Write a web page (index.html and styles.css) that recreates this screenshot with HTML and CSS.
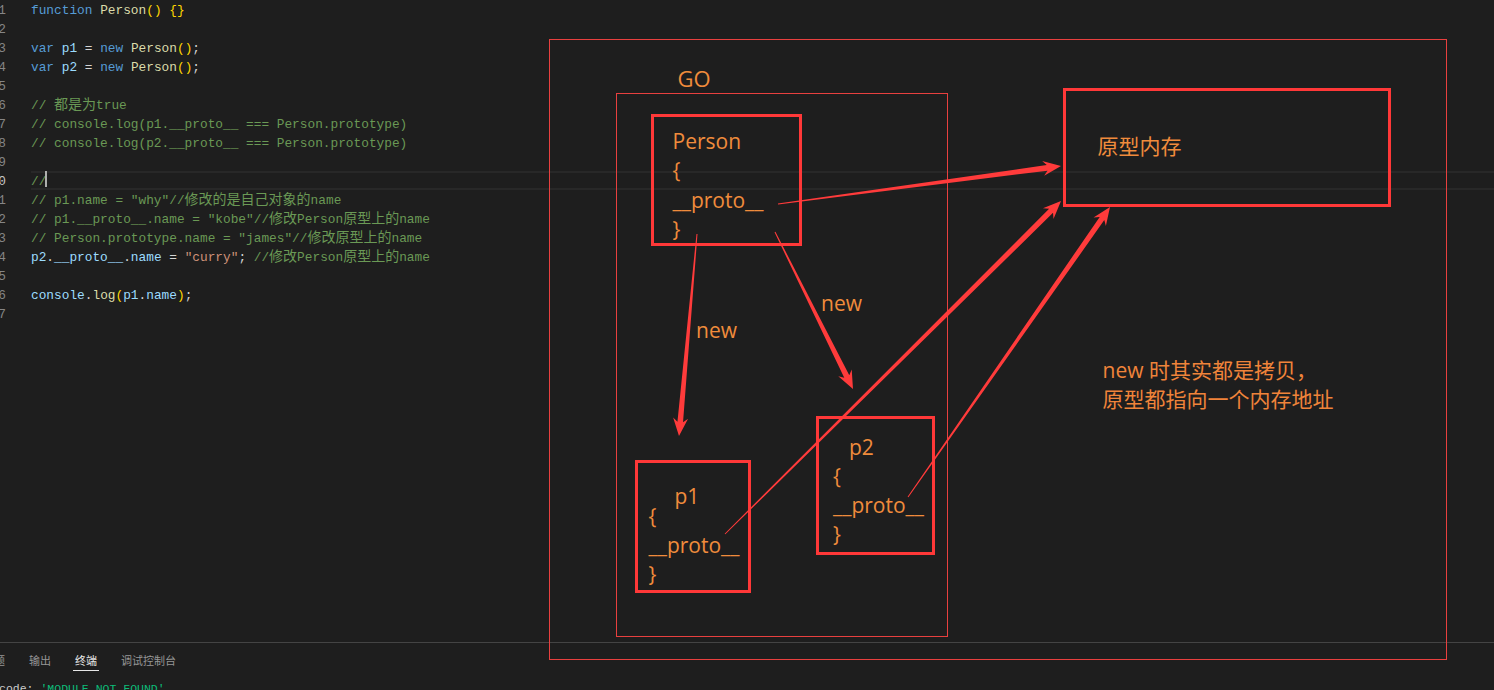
FILE: index.html
```html
<!DOCTYPE html>
<html lang="zh-CN">
<head>
<meta charset="utf-8">
<title>prototype</title>
<link rel="stylesheet" href="styles.css">
</head>
<body>
<div class="editor">
  <div class="gutter">
    <div class="ln">1</div><div class="ln">2</div><div class="ln">3</div><div class="ln">4</div>
    <div class="ln">5</div><div class="ln">6</div><div class="ln">7</div><div class="ln">8</div>
    <div class="ln">9</div><div class="ln cur">10</div><div class="ln">11</div><div class="ln">12</div>
    <div class="ln">13</div><div class="ln">14</div><div class="ln">15</div><div class="ln">16</div>
    <div class="ln">17</div>
  </div>
  <div class="code">
    <div class="line"><span class="k">function</span> <span class="f">Person</span><span class="b">()</span> <span class="b">{}</span></div>
    <div class="line"></div>
    <div class="line"><span class="k">var</span> <span class="v">p1</span> = <span class="k">new</span> <span class="f">Person</span><span class="b">()</span>;</div>
    <div class="line"><span class="k">var</span> <span class="v">p2</span> = <span class="k">new</span> <span class="f">Person</span><span class="b">()</span>;</div>
    <div class="line"></div>
    <div class="line"><span class="c">// <span class="z">都是为</span>true</span></div>
    <div class="line"><span class="c">// console.log(p1.__proto__ === Person.prototype)</span></div>
    <div class="line"><span class="c">// console.log(p2.__proto__ === Person.prototype)</span></div>
    <div class="line"></div>
    <div class="line current"><span class="c">//</span><span class="caret"></span></div>
    <div class="line"><span class="c">// p1.name = "why"//<span class="z">修改的是自己对象的</span>name</span></div>
    <div class="line"><span class="c">// p1.__proto__.name = "kobe"//<span class="z">修改</span>Person<span class="z">原型上的</span>name</span></div>
    <div class="line"><span class="c">// Person.prototype.name = "james"//<span class="z">修改原型上的</span>name</span></div>
    <div class="line"><span class="v">p2</span>.<span class="v">__proto__</span>.<span class="v">name</span> = <span class="s">"curry"</span>; <span class="c">//<span class="z">修改</span>Person<span class="z">原型上的</span>name</span></div>
    <div class="line"></div>
    <div class="line"><span class="v">console</span>.<span class="f">log</span><span class="b">(</span><span class="v">p1</span>.<span class="v">name</span><span class="b">)</span>;</div>
    <div class="line"></div>
  </div>
</div>

<div class="panel">
  <div class="tabs">
    <div class="tab">问题</div>
    <div class="tab">输出</div>
    <div class="tab active">终端</div>
    <div class="tab">调试控制台</div>
  </div>
  <div class="term"><span class="t-key">code: </span><span class="t-str">'MODULE_NOT_FOUND'</span></div>
</div>

<div class="diagram">
  <div class="frame outer"></div>
  <div class="frame go"></div>
  <div class="label go-label">GO</div>
  <div class="label new1">new</div>
  <div class="label new2">new</div>
  <div class="label note">
    <div>new 时其实都是拷贝，</div>
    <div>原型都指向一个内存地址</div>
  </div>

  <div class="box person">
    <div class="title">Person</div>
    <div>{</div>
    <div>__proto__</div>
    <div>}</div>
  </div>

  <div class="box memory">
    <div>原型内存</div>
  </div>

  <div class="box p1">
    <div class="title">p1</div>
    <div>{</div>
    <div>__proto__</div>
    <div>}</div>
  </div>

  <div class="box p2">
    <div class="title">p2</div>
    <div>{</div>
    <div>__proto__</div>
    <div>}</div>
  </div>

  <svg class="arrows" viewBox="0 0 1494 690" width="1494" height="690">
    <polygon points="778.07,204.50 1047.50,170.64 1044.16,175.83 1061,166 1042.16,160.97 1046.76,165.09 777.93,203.50"/>
    <polygon points="696.50,233.96 677.45,421.81 673.13,417.40 679,436 688.07,418.74 683.03,422.31 697.50,234.04"/>
    <polygon points="774.55,232.22 844.26,377.71 838.27,376.22 853,389 851.71,369.54 849.28,375.21 775.45,231.78"/>
    <polygon points="725.35,534.36 1053.03,212.85 1053.50,219.00 1061,201 1042.94,208.34 1049.09,208.87 724.65,533.64"/>
    <polygon points="908.41,497.29 1104.30,220.09 1105.86,226.06 1110,207 1093.56,217.48 1099.70,216.89 907.59,496.71"/>
  </svg>
</div>
</body>
</html>
```

FILE: styles.css
```css
html, body {
  margin: 0;
  padding: 0;
}

body {
  width: 1494px;
  height: 690px;
  overflow: hidden;
  background: #1e1e1e;
  position: relative;
  display: flex;
  flex-direction: column;
}

/* ---------- editor ---------- */
.editor {
  height: 642px;
  display: flex;
  flex-shrink: 0;
  font-family: "Liberation Mono", "DejaVu Sans Mono", monospace;
  font-size: 12.8px;
}

.gutter {
  width: 31px;
  flex-shrink: 0;
  box-sizing: border-box;
  padding-right: 25px;
  color: #858585;
}

.ln {
  margin-left: -24px;
  height: 19px;
  line-height: 21px;
  text-align: right;
  white-space: pre;
}

.ln.cur {
  color: #c6c6c6;
}

.code {
  flex: 1;
  color: #d4d4d4;
}

.line {
  height: 19px;
  line-height: 21px;
  white-space: pre;
}

.line.current {
  box-shadow: inset 0 2px 0 #282828, inset 0 -2px 0 #282828;
}

.k { color: #569cd6; }
.f { color: #dcdcaa; }
.v { color: #9cdcfe; }
.s { color: #ce9178; }
.c { color: #6a9955; }
.b { color: #ffd700; }

.z {
  font-family: "Noto Sans CJK SC", sans-serif;
  font-size: 14px;
  line-height: 0.9;
}

.caret {
  display: inline-block;
  vertical-align: top;
  width: 2px;
  height: 16px;
  margin-left: -1px;
  background: #aeafad;
}

/* ---------- bottom panel ---------- */
.panel {
  flex: 1;
  border-top: 1px solid #444444;
  font-family: "Noto Sans CJK SC", sans-serif;
}

.tabs {
  display: flex;
  gap: 24px;
  margin-left: -17px;
  height: 35px;
}

.tab {
  font-size: 11px;
  line-height: 17px;
  height: 28px;
  box-sizing: border-box;
  padding-top: 9px;
  color: #969696;
  white-space: nowrap;
}

.tab.active {
  color: #e7e7e7;
  border-bottom: 1px solid #e7e7e7;
  padding-left: 2px;
  padding-right: 2px;
  margin-left: -2px;
  margin-right: -2px;
}

.term {
  font-family: "Liberation Mono", monospace;
  font-size: 11.5px;
  line-height: 17px;
  padding-top: 2px;
  margin-left: -1px;
  white-space: pre;
}

.t-key { color: #cccccc; }
.t-str { color: #0dbc79; }

/* ---------- diagram overlay (free canvas) ---------- */
.diagram {
  position: absolute;
  left: 0;
  top: 0;
  width: 1494px;
  height: 690px;
  pointer-events: none;
  font-family: "Open Sans", "Noto Sans CJK SC", sans-serif;
  font-size: 21px;
  line-height: 29px;
  color: #f08c3c;
}

.frame {
  position: absolute;
  box-sizing: border-box;
  border: 1px solid #e8403f;
}

.frame.outer {
  left: 549px;
  top: 39px;
  width: 898px;
  height: 621px;
}

.frame.go {
  left: 616px;
  top: 93px;
  width: 332px;
  height: 544px;
}

.label {
  position: absolute;
  white-space: nowrap;
}

.go-label { left: 677.5px; top: 64px; font-size: 22px; }
.new1 { left: 696px; top: 316px; }
.new2 { left: 821px; top: 289.4px; }
.note { left: 1102.5px; top: 356px; color: #f0843a; }

.box {
  position: absolute;
  box-sizing: border-box;
  border: 3px solid #ff3838;
  white-space: nowrap;
}

.box.person {
  left: 651px;
  top: 114px;
  width: 151px;
  height: 132px;
  padding: 9.5px 0 0 18.5px;
  line-height: 29.5px;
}

.box.memory {
  left: 1063px;
  top: 88px;
  width: 328px;
  height: 119px;
  padding: 40.7px 0 0 31.5px;
}

.box.p1 {
  left: 635px;
  top: 460px;
  width: 116px;
  height: 133px;
  padding: 18.5px 0 0 10.5px;
}

.box.p1 .title {
  margin-left: 26px;
  margin-bottom: -9px;
}

.box.p2 {
  left: 816px;
  top: 416px;
  width: 119px;
  height: 139px;
  padding: 13.8px 0 0 14px;
}

.box.p2 .title {
  margin-left: 16px;
}

.arrows {
  position: absolute;
  left: 0;
  top: 0;
}

.arrows polygon {
  fill: #ff3b3b;
}
```
